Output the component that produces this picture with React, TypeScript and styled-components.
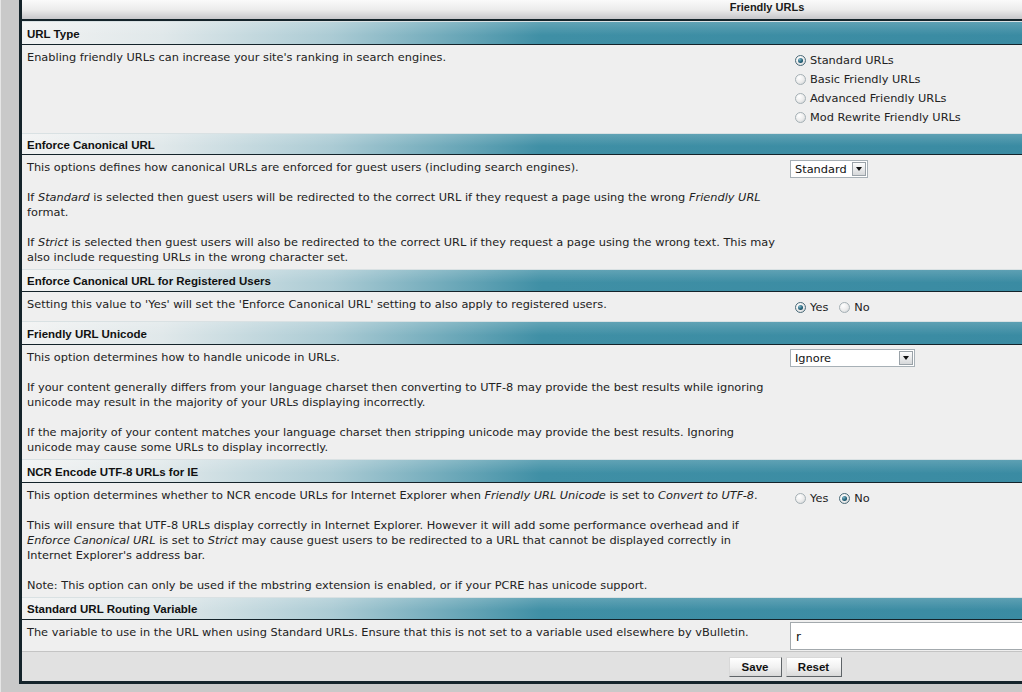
import * as React from "react"
import styled, { createGlobalStyle } from "styled-components"

const GlobalStyle = createGlobalStyle`
  html, body {
    margin: 0;
    padding: 0;
    background: #c9c9c9;
    overflow: hidden;
  }
  body {
    font-family: "DejaVu Sans", Verdana, sans-serif;
    font-size: 11.35px;
    color: #222;
  }
`

const Page = styled.div`
  padding-left: 18px;
  height: 692px;
  border-left: 1px solid #e6e6e6;
  box-sizing: border-box;
`

const Frame = styled.div`
  width: 1490px;
  border-left: 3px solid #14232a;
  border-bottom: 3px solid #14232a;
  background: #efefef;
`

const TitleBar = styled.div`
  height: 19px;
  line-height: 15px;
  text-align: center;
  font-family: "Liberation Sans", Arial, sans-serif;
  font-weight: bold;
  font-size: 11px;
  color: #1a1a1a;
  background: linear-gradient(to bottom, #fafafa 0%, #ececec 50%, #c6c6ca 100%);
  border-bottom: 2px solid #14232a;
`

const SectionHeader = styled.div<{ $h: number }>`
  height: ${p => p.$h}px;
  line-height: ${p => p.$h + 2}px;
  padding-left: 5px;
  font-family: "Liberation Sans", Arial, sans-serif;
  font-weight: bold;
  font-size: 11.5px;
  color: #111;
  background:
    linear-gradient(to bottom, rgba(255,255,255,0.18), rgba(255,255,255,0) 60%),
    linear-gradient(to right, #f1f2f2 0px, #e0e8ea 140px, #abcbd4 310px, #3f8fa5 520px, #3587a0 1490px);
  border-top: 1px solid #d9e1e3;
  border-bottom: 1px solid #14232a;
`

const Row = styled.div<{ $h: number }>`
  display: grid;
  grid-template-columns: 763px 1fr;
  height: ${p => p.$h}px;
  background: #efefef;
`

const Desc = styled.div`
  padding: 5px 6px 0 5px;
  line-height: 15px;

  p {
    margin: 0 0 15px 0;
  }
  p:last-child {
    margin-bottom: 0;
  }
`

const Control = styled.div<{ $pt?: number }>`
  padding: ${p => p.$pt ?? 6}px 0 0 5px;
`

const RadioList = styled.div<{ $inline?: boolean }>`
  display: flex;
  flex-direction: ${p => (p.$inline ? "row" : "column")};
  gap: ${p => (p.$inline ? "6px" : "0")};
`

const RadioLabel = styled.label`
  display: flex;
  align-items: center;
  height: 19px;
  line-height: 19px;
  color: #222;
`

const RadioDot = styled.span<{ $on?: boolean }>`
  display: inline-block;
  position: relative;
  box-sizing: border-box;
  width: 11px;
  height: 11px;
  margin: 0 4px 0 5px;
  border-radius: 50%;
  border: 1px solid ${p => (p.$on ? "#4a6a78" : "#a5b0b5")};
  background: radial-gradient(circle at 35% 30%, #ffffff 0%, #ececec 55%, #c9cfd2 100%);

  &:after {
    content: "";
    display: ${p => (p.$on ? "block" : "none")};
    position: absolute;
    left: 2px;
    top: 2px;
    width: 5px;
    height: 5px;
    border-radius: 50%;
    background: radial-gradient(circle at 35% 30%, #7fb6c9 0%, #1d5b72 60%, #0f3a4c 100%);
  }
`

const SelectBox = styled.div<{ $w: number }>`
  display: flex;
  align-items: center;
  justify-content: space-between;
  width: ${p => p.$w}px;
  height: 18px;
  box-sizing: border-box;
  border: 1px solid #a7b0b6;
  background: #fff;
  padding-left: 4px;
  color: #111;
`

const SelectArrow = styled.span`
  display: flex;
  align-items: center;
  justify-content: center;
  width: 14px;
  height: 14px;
  margin-right: 1px;
  box-sizing: border-box;
  border: 1px solid #9aa2a8;
  background: linear-gradient(to bottom, #fdfdfd, #d6d8da);

  &:after {
    content: "";
    border-left: 3px solid transparent;
    border-right: 3px solid transparent;
    border-top: 4px solid #111;
  }
`

const TextInput = styled.div`
  height: 28px;
  box-sizing: border-box;
  border: 1px solid #a3a9ad;
  background: #fff;
  padding: 7px 0 0 5px;
  font-size: 12px;
  color: #111;
`

const Footer = styled.div`
  height: 30px;
  display: flex;
  justify-content: center;
  align-items: center;
  gap: 4px;
  padding-left: 36px;
  box-sizing: border-box;
  background: #e1e1e1;
  border-top: 1px solid #c4c4c4;
`

const Button = styled.button<{ $w: number }>`
  width: ${p => p.$w}px;
  height: 20px;
  padding: 0;
  font-family: "Liberation Sans", Arial, sans-serif;
  font-weight: bold;
  font-size: 11.5px;
  color: #111;
  border: 1px solid #5f6468;
  border-top-color: #d8d8d8;
  border-left-color: #d8d8d8;
  background: linear-gradient(to bottom, #ffffff 0%, #f2f2f2 50%, #d9d9d9 100%);
`

type RadioProps = { label: string; on?: boolean }

const Radio: React.FC<RadioProps> = ({ label, on }) => (
  <RadioLabel>
    <RadioDot $on={on} />
    {label}
  </RadioLabel>
)

export default function App() {
  return (
    <>
      <GlobalStyle />
      <Page>
        <Frame>
          <TitleBar>Friendly URLs</TitleBar>

          <SectionHeader $h={22}>URL Type</SectionHeader>
          <Row $h={88}>
            <Desc>
              <p>Enabling friendly URLs can increase your site's ranking in search engines.</p>
            </Desc>
            <Control $pt={6}>
              <RadioList>
                <Radio label="Standard URLs" on />
                <Radio label="Basic Friendly URLs" />
                <Radio label="Advanced Friendly URLs" />
                <Radio label="Mod Rewrite Friendly URLs" />
              </RadioList>
            </Control>
          </Row>

          <SectionHeader $h={20}>Enforce Canonical URL</SectionHeader>
          <Row $h={114}>
            <Desc>
              <p>This options defines how canonical URLs are enforced for guest users (including search engines).</p>
              <p>
                If <i>Standard</i> is selected then guest users will be redirected to the correct URL if they
                request a page using the wrong <i>Friendly URL</i> format.
              </p>
              <p>
                If <i>Strict</i> is selected then guest users will also be redirected to the correct URL if they
                request a page using the wrong text. This may also include requesting URLs in the wrong character
                set.
              </p>
            </Desc>
            <Control $pt={5}>
              <SelectBox $w={78}>
                Standard
                <SelectArrow />
              </SelectBox>
            </Control>
          </Row>

          <SectionHeader $h={21}>Enforce Canonical URL for Registered Users</SectionHeader>
          <Row $h={29}>
            <Desc>
              <p>Setting this value to 'Yes' will set the 'Enforce Canonical URL' setting to also apply to registered users.</p>
            </Desc>
            <Control $pt={6}>
              <RadioList $inline>
                <Radio label="Yes" on />
                <Radio label="No" />
              </RadioList>
            </Control>
          </Row>

          <SectionHeader $h={22}>Friendly URL Unicode</SectionHeader>
          <Row $h={114}>
            <Desc>
              <p>This option determines how to handle unicode in URLs.</p>
              <p>
                If your content generally differs from your language charset then converting to UTF-8 may provide
                the best results while ignoring unicode may result in the majority of your URLs displaying
                incorrectly.
              </p>
              <p>
                If the majority of your content matches your language charset then stripping unicode may provide
                the best results. Ignoring unicode may cause some URLs to display incorrectly.
              </p>
            </Desc>
            <Control $pt={4}>
              <SelectBox $w={125}>
                Ignore
                <SelectArrow />
              </SelectBox>
            </Control>
          </Row>

          <SectionHeader $h={22}>NCR Encode UTF-8 URLs for IE</SectionHeader>
          <Row $h={114}>
            <Desc>
              <p>
                This option determines whether to NCR encode URLs for Internet Explorer when{" "}
                <i>Friendly URL Unicode</i> is set to <i>Convert to UTF-8</i>.
              </p>
              <p>
                This will ensure that UTF-8 URLs display correctly in Internet Explorer. However it will add some
                performance overhead and if <i>Enforce Canonical URL</i> is set to <i>Strict</i> may cause guest
                users to be redirected to a URL that cannot be displayed correctly in Internet Explorer's address
                bar.
              </p>
              <p>Note: This option can only be used if the mbstring extension is enabled, or if your PCRE has unicode support.</p>
            </Desc>
            <Control $pt={6}>
              <RadioList $inline>
                <Radio label="Yes" />
                <Radio label="No" on />
              </RadioList>
            </Control>
          </Row>

          <SectionHeader $h={21}>Standard URL Routing Variable</SectionHeader>
          <Row $h={31}>
            <Desc>
              <p>The variable to use in the URL when using Standard URLs. Ensure that this is not set to a variable used elsewhere by vBulletin.</p>
            </Desc>
            <Control $pt={2}>
              <TextInput>r</TextInput>
            </Control>
          </Row>

          <Footer>
            <Button $w={53}>Save</Button>
            <Button $w={56}>Reset</Button>
          </Footer>
        </Frame>
      </Page>
    </>
  )
}
